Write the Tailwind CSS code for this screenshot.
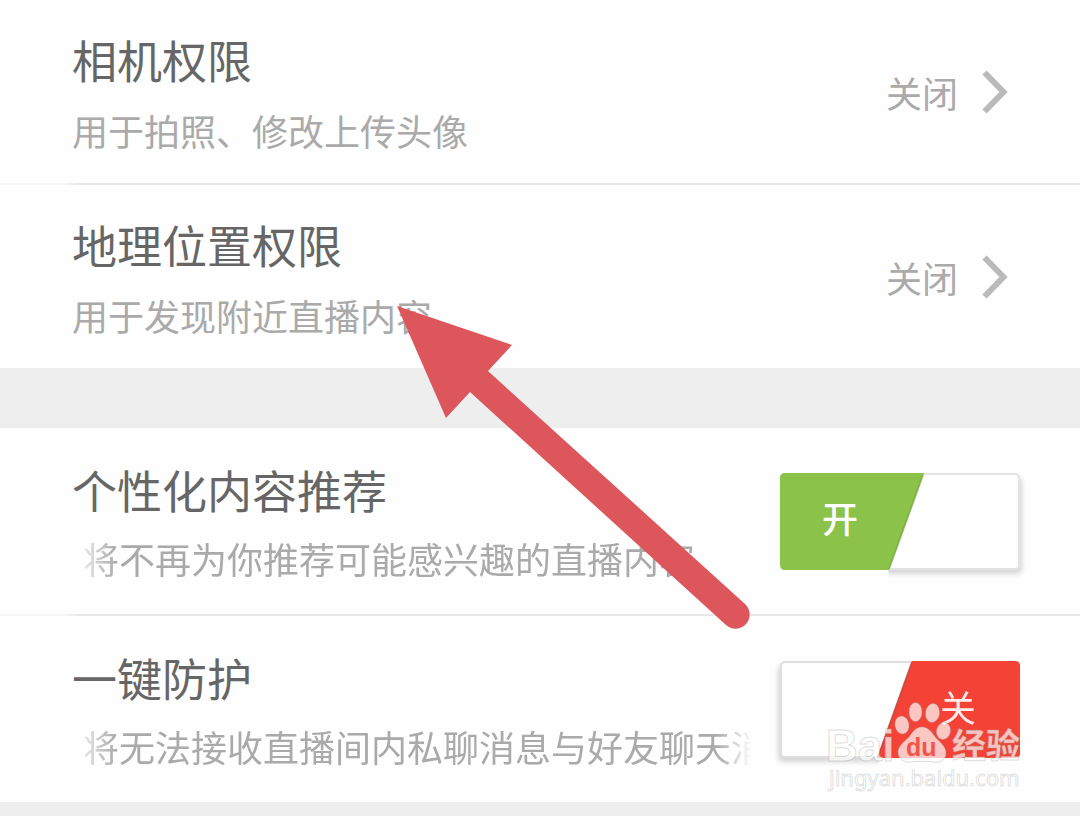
<!DOCTYPE html>
<html lang="zh-CN">
<head>
    <meta charset="UTF-8">
    <meta name="viewport" content="width=device-width, initial-scale=1.0">
    <title>隐私设置</title>
    <script src="https://cdn.jsdelivr.net/npm/@tailwindcss/browser@4"></script>
</head>
<body class="relative min-h-screen overflow-x-hidden bg-[#eeeeee] font-['Noto_Sans_CJK_SC',sans-serif]">
    <!-- 系统权限 -->
    <section class="bg-[#fefefe]">
        <a href="#" class="flex items-center justify-between pl-18 pr-[72px]">
            <div class="pt-[30px] pb-[29px]">
                <h2 class="text-[45px] leading-[60px] text-[#666666]">相机权限</h2>
                <p class="mt-4 text-[36px] leading-[48px] text-[#aaaaaa]">用于拍照、修改上传头像</p>
            </div>
            <div class="flex items-center gap-6">
                <span class="text-[36px] leading-[48px] text-[#aaaaaa]">关闭</span>
                <svg class="h-[44px] w-[26px]" viewBox="0 0 26 44" fill="none" stroke="#bababa" stroke-width="6"><path d="M2.500 2.500L21.500 22L2.500 41.500"/></svg>
            </div>
        </a>
        <hr class="h-[2px] border-0 bg-linear-to-r from-[#f6f6f6] from-[64px] to-[#e8e8e8] to-[80px]">
        <a href="#" class="flex items-center justify-between pl-18 pr-[72px]">
            <div class="pt-[30px] pb-[29px]">
                <h2 class="text-[45px] leading-[60px] text-[#666666]">地理位置权限</h2>
                <p class="mt-4 text-[36px] leading-[48px] text-[#aaaaaa]">用于发现附近直播内容</p>
            </div>
            <div class="flex items-center gap-6">
                <span class="text-[36px] leading-[48px] text-[#aaaaaa]">关闭</span>
                <svg class="h-[44px] w-[26px]" viewBox="0 0 26 44" fill="none" stroke="#bababa" stroke-width="6"><path d="M2.500 2.500L21.500 22L2.500 41.500"/></svg>
            </div>
        </a>
    </section>

    <!-- 开关设置 -->
    <section class="mt-[60px] bg-[#fefefe]">
        <div class="flex items-center justify-between gap-7 pl-18 pr-[60px]">
            <label for="recommend" class="min-w-0 flex-1 pt-8 pb-8">
                <span class="block text-[45px] leading-[60px] text-[#666666]">个性化内容推荐</span>
                <span class="mt-[14px] block overflow-hidden pl-[11px] text-[36px] leading-[48px] whitespace-nowrap text-[#aaaaaa] [mask-image:linear-gradient(to_right,transparent,#000_44px,#000_calc(100%-36px),transparent)]">将不再为你推荐可能感兴趣的直播内容</span>
            </label>
            <div class="relative h-[97px] w-[240px] shrink-0">
                <input type="checkbox" id="recommend" checked class="block size-full appearance-none rounded-[5px] border-2 border-[#e4e4e4] bg-white shadow-[2px_4px_5px_rgba(0,0,0,0.16)]">
                <svg class="pointer-events-none absolute inset-0 overflow-visible" width="240" height="97" viewBox="0 0 240 97">
                    <path d="M-3 92H108.500V108H-3Z" fill="#fefefe"/>
                    <path d="M5 0H144L109 97H5Q0 97 0 92V5Q0 0 5 0Z" fill="#8bc34a"/>
                    <path d="M143 2L109 96" stroke="#78a043" stroke-width="2" opacity=".6"/>
                    <text x="42" y="60" font-size="36" font-weight="500" fill="#fff">开</text>
                </svg>
            </div>
        </div>
        <hr class="h-[2px] border-0 bg-linear-to-r from-[#f6f6f6] from-[64px] to-[#e8e8e8] to-[80px]">
        <div class="flex items-center justify-between gap-7 pl-18 pr-[60px]">
            <label for="protect" class="min-w-0 flex-1 pt-8 pb-8">
                <span class="block text-[45px] leading-[60px] text-[#666666]">一键防护</span>
                <span class="mt-[14px] block overflow-hidden pl-[11px] text-[36px] leading-[48px] whitespace-nowrap text-[#aaaaaa] [mask-image:linear-gradient(to_right,transparent,#000_44px,#000_calc(100%-36px),transparent)]">将无法接收直播间内私聊消息与好友聊天消息</span>
            </label>
            <div class="relative h-[97px] w-[240px] shrink-0">
                <input type="checkbox" id="protect" class="block size-full appearance-none rounded-[5px] border-2 border-[#dedede] bg-white shadow-[-2px_4px_5px_rgba(0,0,0,0.16)]">
                <svg class="pointer-events-none absolute inset-0 overflow-visible" width="240" height="97" viewBox="0 0 240 97">
                    <path d="M100 97H244V108H97Z" fill="#fefefe"/>
                    <path d="M132 0H235Q240 0 240 5V92Q240 97 235 97H97Z" fill="#f44336"/>
                    <path d="M132 1L98 96" stroke="#c4473e" stroke-width="2" opacity=".7"/>
                    <text x="160" y="61" font-size="36" fill="#fff" opacity=".9">关</text>
                </svg>
                <!-- 水印 -->
                <svg class="pointer-events-none absolute top-[40px] left-[44px]" width="206" height="96" viewBox="824 700 206 96">
                    <g fill="#fff" fill-opacity=".7" stroke="#999" stroke-opacity=".35" stroke-width="1">
                        <text x="826" y="760" font-family="Liberation Sans, sans-serif" font-weight="700" font-size="44">Bai</text>
                        <ellipse cx="902" cy="724" rx="7" ry="9" transform="rotate(-10 902 724)"/>
                        <ellipse cx="915.500" cy="711" rx="6.500" ry="9.500"/>
                        <ellipse cx="932.500" cy="712" rx="7" ry="9.500" transform="rotate(8 932.500 712)"/>
                        <ellipse cx="943.500" cy="730" rx="7" ry="8.500" transform="rotate(14 943.500 730)"/>
                        <path d="M922 726C929 726 932 732 936 737C941 742 946 746 946 752C946 759 940 762 933 761C925 760 918 760 911 761C904 762 898 758 898 751C898 745 904 741 908 737C912 733 914 726 922 726Z"/>
                        <text x="952" y="757" font-weight="700" font-size="34">经验</text>
                    </g>
                    <text x="829" y="785" font-family="Noto Sans, sans-serif" font-size="22" fill="#fff" stroke="#999" stroke-opacity=".3" stroke-width="1">jingyan.baidu.com</text>
                    <text x="906" y="755" font-family="Liberation Sans, sans-serif" font-weight="700" font-size="25" fill="#f0554b">du</text>
                </svg>
            </div>
        </div>
    </section>

    <!-- 指示箭头 -->
    <svg class="pointer-events-none absolute top-[300px] left-[390px]" width="370" height="336" viewBox="390 300 370 336">
        <path d="M397 306L512 345L488 371L745 604A14 14 0 0 1 726 625L470 392L446 418Z" fill="#dc565b"/>
    </svg>
</body>
</html>
